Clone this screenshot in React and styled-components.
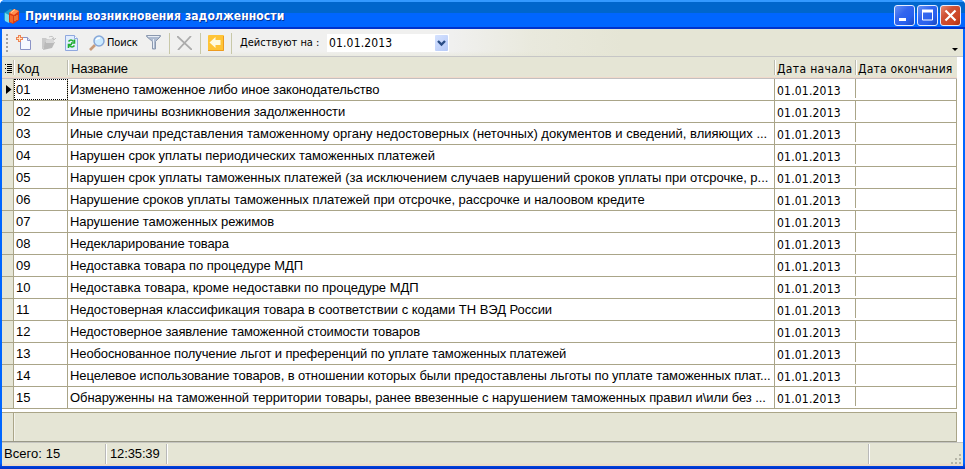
import React from 'react';
import styled, { createGlobalStyle } from 'styled-components';

const Global = createGlobalStyle`
  * { box-sizing: border-box; }
  body { margin: 0; background: #fff; overflow: hidden; }
`;

const ui = '"DejaVu Sans Condensed", "DejaVu Sans", sans-serif';
const grid = '"Liberation Sans", Arial, sans-serif';

const Window = styled.main`
  width: 965px;
  height: 469px;
  display: flex;
  flex-direction: column;
  background: linear-gradient(#0066ff, #0066ff 463px, #0033cc 468px);
  border-radius: 5px 5px 0 0;
  overflow: hidden;
  color: #000;
  font: 13px/14px ${grid};
`;

const TitleBar = styled.header`
  height: 29px;
  flex: none;
  display: flex;
  align-items: center;
  padding: 2px 4px 0 4px;
  background: linear-gradient(#3399ff 0 2px, #0066cc 2px 13px, #0066ff 13px 27px, #0033cc 27px);
`;

const Caption = styled.h1`
  flex: 1;
  margin: 0 0 0 5px;
  color: #fff;
  font: bold 12px/16px ${ui};
  font-stretch: condensed;
  letter-spacing: 0.09px;
  text-shadow: 1px 1px #003399;
  white-space: nowrap;
`;

const WindowButtons = styled.div`
  display: flex;
  gap: 2px;
`;

const WindowButton = styled.button`
  width: 21px;
  height: 21px;
  padding: 0;
  border: 1px solid #e4ecff;
  border-radius: 3px;
  display: block;
  background: ${(p) =>
    p.$close
      ? 'linear-gradient(135deg, #e88a70, #cf5136 35%, #cc4422 75%, #a83014)'
      : 'linear-gradient(135deg, #6690f5, #3366ee 40%, #2860ee 70%, #1b48bd)'};
  svg { display: block; }
`;

const Client = styled.div`
  flex: none;
  width: 961px;
  height: 437px;
  margin-left: 2px;
  display: flex;
  flex-direction: column;
  background: #fff;
`;

const Toolbar = styled.div`
  height: 28px;
  flex: none;
  display: flex;
  align-items: center;
  border-bottom: 1px solid #c6c6c6;
  background:
    linear-gradient(transparent 0 22px, rgba(229, 229, 213, 0.5) 27px),
    linear-gradient(90deg, #f0f0ef 0 450px, #e9e9dd 530px, #e5e5d5 620px);
  font: 11px/14px ${ui};
  font-stretch: condensed;
`;

const Slot = styled.span`
  flex: none;
  display: flex;
  width: ${(p) => p.$w}px;
  white-space: nowrap;
  letter-spacing: ${(p) => p.$spacing || 0}px;
`;

const Separator = styled.span`
  flex: none;
  width: 1px;
  height: 21px;
  margin: 1px ${(p) => p.$right}px 0 0;
  background: #c8c8a8;
`;

const DateField = styled.div`
  flex: none;
  width: 122px;
  height: 18px;
  display: flex;
  align-items: center;
  justify-content: space-between;
  padding: 2px 1px 1px 2px;
  background: #fff;
  font-size: 12px;
  letter-spacing: 0.15px;
`;

const DropButton = styled.button`
  width: 13px;
  height: 16px;
  padding: 0;
  border: 0;
  border-radius: 1px;
  background: linear-gradient(135deg, #d5e2ff, #b5c9f8);
  svg { display: block; }
`;

const Overflow = styled.span`
  margin: 13px 5px 0 auto;
  border: 3px solid transparent;
  border-top-color: #000;
  border-bottom: 0;
`;

const Row = styled.div`
  flex: none;
  width: 955px;
  height: 22px;
  display: grid;
  grid-template-columns: 12px 54px 707px 81px 101px;
  border-bottom: 1px solid #aaa588;
`;

const HeaderRow = styled(Row)`
  background: #e5e5d5;
  border-bottom: 1px solid #c2c0c0;
  box-shadow: inset 0 -1px #f0d9cb;
`;

const HeadCell = styled.div`
  height: 15px;
  margin-top: 3px;
  padding: 2px 0 0 ${(p) => p.$pad || 2}px;
  border-right: 1px solid ${(p) => (p.$last ? 'transparent' : '#bcbcb0')};
  box-shadow: ${(p) => (p.$last ? 'none' : '1px 0 #fff')};
  white-space: nowrap;
  font-family: ${(p) => (p.$ui ? ui : grid)};
  font-size: ${(p) => (p.$ui ? 12 : 13)}px;
  font-stretch: condensed;
  letter-spacing: ${(p) => p.$spacing || 0}px;
`;

const Marker = styled.div`
  display: flex;
  align-items: center;
  padding-left: 4px;
  background: #e5e5d5;
  border-right: 1px solid #aaa588;
`;

const Cell = styled.div`
  padding: 4px 2px 0;
  border-right: 1px solid #aaa588;
  white-space: nowrap;
  overflow: hidden;
  letter-spacing: ${(p) => p.$spacing || 0}px;
  outline: ${(p) => (p.$focus ? '1px dotted #000' : 'none')};
  outline-offset: -1px;
`;

const DateCell = styled(Cell)`
  height: 19px;
  padding-top: 5px;
  font: 12px/14px ${ui};
  font-stretch: condensed;
`;

const EndCell = styled.div`
  border-right: 1px solid #aaa588;
`;

const Summary = styled.div`
  flex: none;
  width: 955px;
  height: 30px;
  margin-top: 3px;
  display: grid;
  grid-template-columns: 12px 1fr;
  border: 1px solid #aaa588;
  border-left: 0;
  border-bottom-color: #999888;
  background: #e5e5d5;
`;

const SummaryHead = styled.div`
  border-right: 1px solid #aaa588;
  box-shadow: 1px 0 #f4f4ec;
`;

const StatusBar = styled.footer`
  flex: 1;
  display: flex;
  align-items: center;
  background: linear-gradient(#c5c5c0 0 1px, #e5e5d5 1px 21px, #ecd9c6 23px);
`;

const Status = styled.span`
  width: ${(p) => p.$w}px;
  height: 20px;
  padding: 3px 0 0 ${(p) => p.$pad}px;
  border-right: ${(p) => (p.$last ? '0' : '1px solid #b9b9b9')};
  box-shadow: ${(p) => (p.$last ? 'none' : '1px 0 #fff')};
  letter-spacing: ${(p) => p.$spacing || 0}px;
`;

const Grip = styled.svg`
  align-self: flex-end;
  margin: 0 1px 1px auto;
`;

const BooksIcon = () => (
  <svg width="16" height="16" viewBox="0 0 16 16">
    <path d="M0 5l6-4 3 1v10l-4 3-5-3z" fill="#1c9fce" />
    <path d="M1 5l4 2v8l-4-2z" fill="#78dcf2" />
    <path d="M5 5l5-4 5 2v9l-6 4-4-2z" fill="#dd3b12" />
    <path d="M5 5l5-4 5 2-5 4z" fill="#ff9050" />
    <path d="M7 4.5l4-3" stroke="#ffd8a8" />
    <path d="M6 7l3 1v7l-3-1z" fill="#f46a26" />
    <path d="M11 8v5m2-6v5" stroke="#f8b060" />
  </svg>
);

const GripIcon = () => (
  <svg width="2" height="18" viewBox="0 0 2 18" fill="#a2a2a2">
    {[0, 4, 8, 12, 16].map((y) => <rect key={y} y={y} width="2" height="2" />)}
  </svg>
);

const NewIcon = () => (
  <svg width="16" height="16" viewBox="0 0 16 16">
    <path d="M4.5 2.5h7l3 3v9h-10z" fill="#f7f9ff" stroke="#8b93c6" />
    <path d="M11.5 2.5v3h3" fill="#dbe3f6" stroke="#8b93c6" />
    <path d="M0 3.5h7M3.5 0v7" stroke="#ed8355" strokeWidth="3" />
    <path d="M1 3.5h5M3.5 1v5" stroke="#ffe2ba" />
  </svg>
);

const OpenIcon = () => (
  <svg width="16" height="16" viewBox="0 0 16 16">
    <path d="M1 3h4l1 1h4v3H5l-3 7H1z" fill="#cacaca" />
    <path d="M4 7h10l-3 6-9 2z" fill="#bababa" />
    <path d="M5 5l8-2v5H5z" fill="#d8d8d8" />
    <path d="M8 2q4-2 5 2m-2-1l2 2 2-2" fill="none" stroke="#c2c2c2" />
  </svg>
);

const RefreshIcon = () => (
  <svg width="14" height="16" viewBox="0 0 14 16">
    <path d="M.5.5h9l3 3v12H.5z" fill="#e2edff" stroke="#8fa8de" />
    <path d="M9.5.5v3h3" fill="#fff" stroke="#8fa8de" />
    <path d="M3.5 6.500q2.500-3 5 0M9.500 4.500v3.500h-3.500M9.500 10.500q-2.500 3-5 0M3.500 13V9.500h3.500" fill="none" stroke="#20ae30" strokeWidth="1.6" />
  </svg>
);

const SearchIcon = () => (
  <svg width="16" height="16" viewBox="0 0 16 16">
    <path d="M1 15l5-5" stroke="#c79a78" strokeWidth="2.6" />
    <circle cx="10" cy="6" r="5" fill="#cbeaff" stroke="#88a8d8" strokeWidth="1.5" />
    <path d="M7 5q1-2 4-2" fill="none" stroke="#fff" strokeWidth="1.5" />
  </svg>
);

const FilterIcon = () => (
  <svg width="15" height="15" viewBox="0 0 15 15">
    <path d="M.5.5h14v1L9.5 6.5V14h-3V6.5L.5 1.5z" fill="#aebbd0" stroke="#8b98ae" />
    <path d="M2 1.5h11M7.5 4v9" stroke="#e7edf5" />
  </svg>
);

const DeleteIcon = () => (
  <svg width="15" height="14" viewBox="0 0 15 14" fill="none" stroke="#acacac" strokeWidth="1.8">
    <path d="M0 0l15 14M14 0L1 14" />
  </svg>
);

const BackIcon = () => (
  <svg width="16" height="16" viewBox="0 0 16 16">
    <rect width="16" height="16" rx="1" fill="#ffc436" />
    <path d="M0 15.5h15.5V1" fill="none" stroke="#ec9b20" />
    <path d="M1.5 7.5l6-5.5v3h5v5h-5v3z" fill="#fffbe0" />
  </svg>
);

const ListIcon = () => (
  <svg width="7" height="9" viewBox="0 0 7 9">
    <path d="M2 .5h5M2 2.5h5M2 4.5h5M2 6.5h5M2 8.5h5M0 .5h1M0 4.5h1M0 8.5h1" stroke="#000" />
  </svg>
);

// code, name, letter spacing of the name
const rows = [
  ['01', 'Изменено таможенное либо иное законодательство', -0.13],
  ['02', 'Иные причины возникновения задолженности', -0.08],
  ['03', 'Иные случаи представления таможенному органу недостоверных (неточных) документов и сведений, влияющих ...', 0],
  ['04', 'Нарушен срок уплаты периодических таможенных платежей', -0.03],
  ['05', 'Нарушен срок уплаты таможенных платежей (за исключением случаев нарушений сроков уплаты при отсрочке, р...', -0.02],
  ['06', 'Нарушение сроков уплаты таможенных платежей при отсрочке, рассрочке и налоовом кредите', -0.03],
  ['07', 'Нарушение таможенных режимов', -0.04],
  ['08', 'Недекларирование товара', -0.12],
  ['09', 'Недоставка товара по процедуре МДП', -0.03],
  ['10', 'Недоставка товара, кроме недоставки по процедуре МДП', -0.02],
  ['11', 'Недостоверная классификация товара в соответствии с кодами ТН ВЭД России', -0.04],
  ['12', 'Недостоверное заявление таможенной стоимости товаров', -0.12],
  ['13', 'Необоснованное получение льгот и преференций по уплате таможенных платежей', -0.12],
  ['14', 'Нецелевое использование товаров, в отношении которых были предоставлены льготы по уплате таможенных плат...', -0.08],
  ['15', 'Обнаруженны на таможенной территории товары, ранее ввезенные с нарушением таможенных правил и\\или без ...', -0.07],
];

export default function App() {
  return (
    <Window>
      <Global />
      <TitleBar>
        <BooksIcon />
        <Caption>Причины возникновения задолженности</Caption>
        <WindowButtons>
          <WindowButton aria-label="Свернуть">
            <svg width="19" height="19"><path d="M4 13.5h7" stroke="#fff" strokeWidth="3" /></svg>
          </WindowButton>
          <WindowButton aria-label="Развернуть">
            <svg width="19" height="19"><path d="M4.5 5v9h10V5M4 5.5h11" fill="none" stroke="#fff" /><path d="M4 5h11" stroke="#fff" strokeWidth="3" /></svg>
          </WindowButton>
          <WindowButton $close aria-label="Закрыть">
            <svg width="19" height="19"><path d="M4.5 4.5l10 10m0-10l-10 10" stroke="#fff" strokeWidth="2.2" /></svg>
          </WindowButton>
        </WindowButtons>
      </TitleBar>
      <Client>
        <Toolbar>
          <Slot $w={4} />
          <Slot $w={10}><GripIcon /></Slot>
          <Slot $w={25}><NewIcon /></Slot>
          <Slot $w={24}><OpenIcon /></Slot>
          <Slot $w={24}><RefreshIcon /></Slot>
          <Slot $w={18}><SearchIcon /></Slot>
          <Slot $w={39} $spacing={-0.15}>Поиск</Slot>
          <Slot $w={23}><FilterIcon /></Slot>
          <Separator $right={7} />
          <Slot $w={23}><DeleteIcon /></Slot>
          <Separator $right={7} />
          <Slot $w={23}><BackIcon /></Slot>
          <Separator $right={8} />
          <Slot $w={87}>Действуют на :</Slot>
          <DateField>
            01.01.2013
            <DropButton aria-label="Выбрать дату">
              <svg width="13" height="16"><path d="M3 6l3.5 3.5L10 6" fill="none" stroke="#294c85" strokeWidth="2.4" /></svg>
            </DropButton>
          </DateField>
          <Overflow />
        </Toolbar>
        <HeaderRow>
          <HeadCell $pad={3}><ListIcon /></HeadCell>
          <HeadCell $pad={3}>Код</HeadCell>
          <HeadCell $pad={3} $spacing={-0.15}>Название</HeadCell>
          <HeadCell $ui $spacing={0.35}>Дата начала</HeadCell>
          <HeadCell $ui $last $spacing={0.2}>Дата окончания</HeadCell>
        </HeaderRow>
        {rows.map(([code, name, spacing], i) => (
          <Row key={code}>
            <Marker>
              {i === 0 && <svg width="6" height="9"><path d="M0 0l5.5 4.5L0 9z" /></svg>}
            </Marker>
            <Cell $focus={i === 0}>{code}</Cell>
            <Cell $spacing={spacing}>{name}</Cell>
            <DateCell $spacing={0.2}>01.01.2013</DateCell>
            <EndCell />
          </Row>
        ))}
        <Summary><SummaryHead /></Summary>
        <StatusBar>
          <Status $w={104} $pad={2} $spacing={0.05}>Всего: 15</Status>
          <Status $w={61} $pad={4} $spacing={-0.13}>12:35:39</Status>
          <Status $w={702} $pad={0} />
          <Status $w={50} $pad={0} $last />
          <Grip width="12" height="12" fill="#b5b5a7">
            <path d="M9 1h2v2H9zM5 5h2v2H5zM9 5h2v2H9zM1 9h2v2H1zM5 9h2v2H5zM9 9h2v2H9z" />
          </Grip>
        </StatusBar>
      </Client>
    </Window>
  );
}
